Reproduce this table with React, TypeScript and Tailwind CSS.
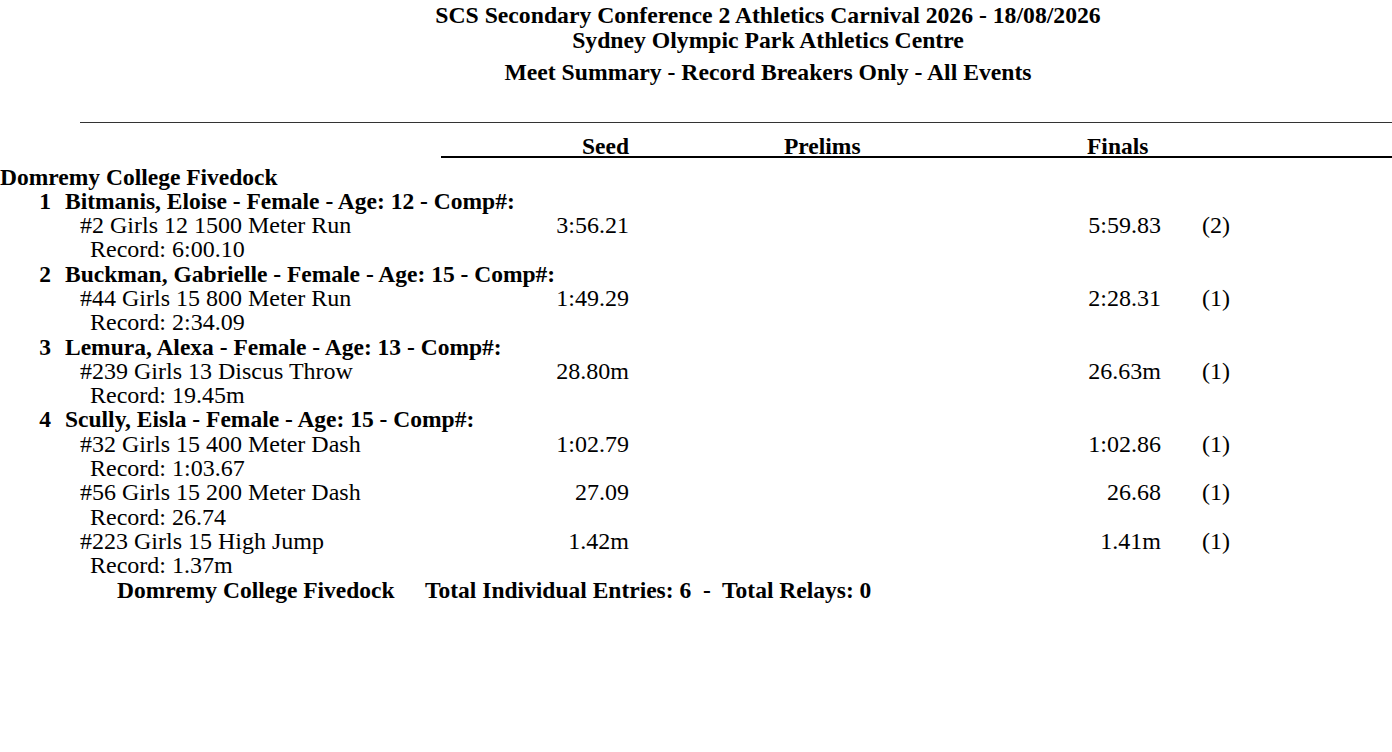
const athletes = [
  {
    no: 1,
    name: 'Bitmanis, Eloise - Female - Age: 12 - Comp#:',
    events: [{ event: '#2 Girls 12 1500 Meter Run', seed: '3:56.21', finals: '5:59.83', place: '(2)', record: 'Record: 6:00.10' }],
  },
  {
    no: 2,
    name: 'Buckman, Gabrielle - Female - Age: 15 - Comp#:',
    events: [{ event: '#44 Girls 15 800 Meter Run', seed: '1:49.29', finals: '2:28.31', place: '(1)', record: 'Record: 2:34.09' }],
  },
  {
    no: 3,
    name: 'Lemura, Alexa - Female - Age: 13 - Comp#:',
    events: [{ event: '#239 Girls 13 Discus Throw', seed: '28.80m', finals: '26.63m', place: '(1)', record: 'Record: 19.45m' }],
  },
  {
    no: 4,
    name: 'Scully, Eisla - Female - Age: 15 - Comp#:',
    events: [
      { event: '#32 Girls 15 400 Meter Dash', seed: '1:02.79', finals: '1:02.86', place: '(1)', record: 'Record: 1:03.67' },
      { event: '#56 Girls 15 200 Meter Dash', seed: '27.09', finals: '26.68', place: '(1)', record: 'Record: 26.74' },
      { event: '#223 Girls 15 High Jump', seed: '1.42m', finals: '1.41m', place: '(1)', record: 'Record: 1.37m' },
    ],
  },
];

export default function App() {
  return (
    <div className="w-screen h-screen overflow-hidden bg-white">
      <div
        className="w-[1536px] text-black text-[23.5px] leading-[24.3px]"
        style={{ fontFamily: "'Liberation Serif', 'Times New Roman', serif" }}
      >
        {/* Title block */}
        <div className="text-center font-bold pt-[3px] text-[23.7px] leading-[24.5px]">
          <div>SCS Secondary Conference 2 Athletics Carnival 2026 - 18/08/2026</div>
          <div>Sydney Olympic Park Athletics Centre</div>
          <div className="mt-[8px]">Meet Summary - Record Breakers Only - All Events</div>
        </div>

        <div className="mx-[80px] mt-[37px] border-t border-[#333]" />

        {/* Column headings */}
        <div className="flex font-bold leading-[19px] mt-[14px] ml-[441px] border-b-2 border-black">
          <div className="w-[188px] text-right">Seed</div>
          <div className="w-[458px] pl-[155px]">Prelims</div>
          <div>Finals</div>
        </div>

        <div className="font-bold mt-[7px]">Domremy College Fivedock</div>

        {athletes.map((a) => (
          <div key={a.no}>
            <div className="flex font-bold">
              <div className="w-[51px] text-right">{a.no}</div>
              <div className="pl-[14px]">{a.name}</div>
            </div>
            {a.events.map((e) => (
              <div key={e.event} className="text-[24px]">
                <div className="flex">
                  <div className="w-[470px] pl-[80px]">{e.event}</div>
                  <div className="w-[159px] text-right">{e.seed}</div>
                  <div className="w-[532px] text-right">{e.finals}</div>
                  <div className="pl-[41px]">{e.place}</div>
                </div>
                <div className="pl-[90px]">{e.record}</div>
              </div>
            ))}
          </div>
        ))}

        <div className="flex font-bold pl-[117px]">
          <div className="w-[308px]">Domremy College Fivedock</div>
          <div className="whitespace-pre">Total Individual Entries: 6  -  Total Relays: 0</div>
        </div>
      </div>
    </div>
  );
}
